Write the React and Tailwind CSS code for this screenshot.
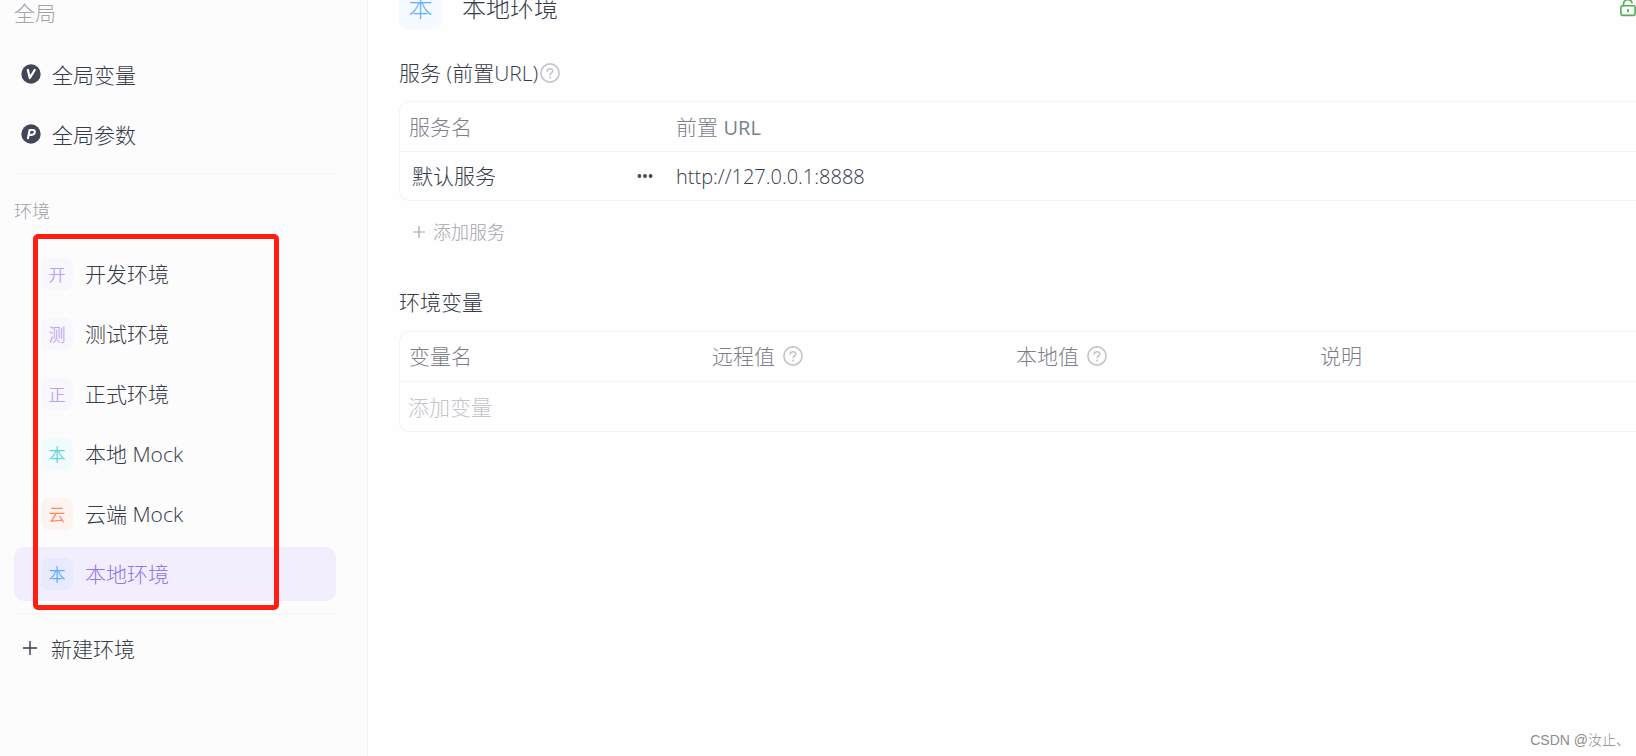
const environments = [
  { mark: '开', name: '开发环境', tone: 'bg-[#f8f7fd] text-[#b9a3f5]' },
  { mark: '测', name: '测试环境', tone: 'bg-[#f8f7fd] text-[#b9a3f5]' },
  { mark: '正', name: '正式环境', tone: 'bg-[#f8f7fd] text-[#b9a3f5]' },
  { mark: '本', name: '本地 Mock', tone: 'bg-[#f1fafc] text-[#5fd6d2]' },
  { mark: '云', name: '云端 Mock', tone: 'bg-[#fff3f0] text-[#ff8a62]' },
  { mark: '本', name: '本地环境', tone: 'bg-[#e8eafe] text-[#5eadff]', active: true },
];

function CircleV() {
  return (
    <svg viewBox="0 0 20 20" className="size-5 shrink-0" aria-hidden="true">
      <circle cx="10" cy="10" r="9.7" fill="#424757" />
      <path d="M6.9 6 8.8 14 13.7 6" fill="none" stroke="#fff" strokeWidth="2.3" strokeLinejoin="round" strokeLinecap="round" />
    </svg>
  );
}

function CircleP() {
  return (
    <svg viewBox="0 0 20 20" className="size-5 shrink-0" aria-hidden="true">
      <circle cx="10" cy="10" r="9.7" fill="#424757" />
      <path d="M7 14.2 8.6 6h3.2c1.6 0 2.3 1 2 2.4-.3 1.5-1.4 2.5-3 2.5H7.8" fill="none" stroke="#fff" strokeWidth="2.1" strokeLinejoin="round" strokeLinecap="round" />
    </svg>
  );
}

function Help() {
  return (
    <svg viewBox="0 0 20 20" className="size-5 shrink-0" fill="none" stroke="#c4c5ca" aria-hidden="true">
      <circle cx="10" cy="10" r="9.1" strokeWidth="1.6" />
      <path d="M7.2 8.2c0-1.6 1.2-2.5 2.8-2.5s2.8.9 2.8 2.3c0 1.8-2.7 1.8-2.7 3.8" strokeWidth="1.5" strokeLinecap="round" />
      <circle cx="10.1" cy="14.4" r="1" fill="#c4c5ca" stroke="none" />
    </svg>
  );
}

function Plus({ className }) {
  return (
    <svg viewBox="0 0 14 14" className={className} fill="none" stroke="currentColor" aria-hidden="true">
      <path d="M7 0v14M0 7h14" strokeWidth="1.4" />
    </svg>
  );
}

function Unlock() {
  return (
    <svg viewBox="0 0 16 18" className="h-[18px] w-4" fill="none" stroke="#4caf50" strokeWidth="1.6" aria-hidden="true">
      <rect x="0.9" y="6.8" width="14.2" height="9.6" rx="1.6" />
      <path d="M3.6 6.6V4.4C3.6 2.2 5.4.8 7.8.8c2.2 0 3.8 1.1 4.2 2.9" strokeLinecap="round" />
      <path d="M8 10v3.2" strokeWidth="1.8" />
    </svg>
  );
}

function GlobalItem({ icon, children }) {
  return (
    <button type="button" className="flex h-[54px] w-full items-center gap-[11px] rounded-[10px] pl-[7px] text-left">
      {icon}
      <span className="pt-[2px]">{children}</span>
    </button>
  );
}

function Sidebar() {
  return (
    <aside className="w-[368px] shrink-0 border-r border-[#f3f3f5] bg-[#fcfcfc] pl-[14px] pr-[31px]">
      <h2 className="h-[47px] leading-[26px] text-[#a2a3ab]">全局</h2>
      <nav className="flex flex-col gap-[6px]" aria-label="全局">
        <GlobalItem icon={<CircleV />}>全局变量</GlobalItem>
        <GlobalItem icon={<CircleP />}>全局参数</GlobalItem>
      </nav>
      <hr className="mt-3 border-[#f5f5f7]" />
      <h2 className="mt-[23px] h-[50px] text-lg leading-7 text-[#a2a3ab]">环境</h2>
      <nav className="relative flex flex-col gap-[6px]" aria-label="环境">
        {environments.map((env) => (
          <button
            key={env.name}
            type="button"
            className={
              env.active
                ? 'flex h-[54px] w-full items-center gap-3 rounded-[10px] bg-[#f2eefd] pl-[27px] text-left text-[#9373ee]'
                : 'flex h-[54px] w-full items-center gap-3 rounded-[10px] pl-[27px] text-left'
            }
          >
            <span className={`flex size-8 items-center justify-center rounded-lg pt-[2px] text-[17px] font-[350] leading-6 ${env.tone}`}>{env.mark}</span>
            <span>{env.name}</span>
          </button>
        ))}
        <div className="pointer-events-none absolute -bottom-[9px] -top-[13px] left-[19px] right-[57px] rounded-[5px] border-[5px] border-[#ff1e12]" />
      </nav>
      <hr className="mt-3 border-t-2 border-[#f7f7f9]" />
      <button type="button" className="mt-[9px] flex h-12 w-full items-center gap-[14px] pl-[9px] text-left">
        <Plus className="size-[14px]" />
        <span className="pt-[2px]">新建环境</span>
      </button>
    </aside>
  );
}

function ServiceTable() {
  return (
    <div className="rounded-l-[10px] border border-r-0 border-[#f3f3f5]">
      <table className="w-full table-fixed text-left">
        <colgroup>
          <col className="w-[267px]" />
          <col />
        </colgroup>
        <thead className="text-[#7d808b]">
          <tr className="h-[49px] border-b border-[#f3f3f5]">
            <th scope="col" className="pl-[9px] pt-[2px] font-light">服务名</th>
            <th scope="col" className="pl-[9px] pt-[2px] font-light">前置 <span className="text-xl font-medium">URL</span></th>
          </tr>
        </thead>
        <tbody>
          <tr className="h-[49px]">
            <td className="pl-3 pr-[14px]">
              <div className="flex items-center">
                <input aria-label="服务名" defaultValue="默认服务" className="h-8 w-0 min-w-0 flex-1 bg-transparent pt-[1px] outline-none" />
                <button type="button" aria-label="更多">
                  <svg viewBox="0 0 16 6" className="h-[6px] w-4" fill="#424757" aria-hidden="true">
                    <circle cx="2.4" cy="3" r="1.9" />
                    <circle cx="8" cy="3" r="1.9" />
                    <circle cx="13.6" cy="3" r="1.9" />
                  </svg>
                </button>
              </div>
            </td>
            <td className="pl-[9px]">
              <input aria-label="前置 URL" defaultValue="http://127.0.0.1:8888" className="h-8 w-full bg-transparent pt-[2px] text-xl outline-none" />
            </td>
          </tr>
        </tbody>
      </table>
    </div>
  );
}

function VariableTable() {
  return (
    <div className="rounded-l-[10px] border border-r-0 border-[#f3f3f5]">
      <table className="w-full table-fixed text-left">
        <colgroup>
          <col className="w-[303px]" />
          <col className="w-[304px]" />
          <col className="w-[304px]" />
          <col />
        </colgroup>
        <thead className="text-[#7d808b]">
          <tr className="h-[49px] border-b border-[#f3f3f5]">
            <th scope="col" className="pl-[9px] font-light">变量名</th>
            <th scope="col" className="pl-[9px] font-light"><span className="flex items-center gap-2">远程值<Help /></span></th>
            <th scope="col" className="pl-[9px] font-light"><span className="flex items-center gap-2">本地值<Help /></span></th>
            <th scope="col" className="pl-[9px] font-light">说明</th>
          </tr>
        </thead>
        <tbody>
          <tr className="h-[50px]">
            <td colSpan={4} className="pl-2">
              <input aria-label="变量名" placeholder="添加变量" className="h-8 w-full bg-transparent pt-[1px] outline-none placeholder:text-[#c4c5ca]" />
            </td>
          </tr>
        </tbody>
      </table>
    </div>
  );
}

export default function App() {
  return (
    <div className="relative flex min-h-screen overflow-hidden bg-[#fefefe] font-['Open_Sans','Noto_Sans_CJK_SC',sans-serif] text-[21px] font-light leading-8 text-[#363b4b]">
      <Sidebar />
      <main className="min-w-0 flex-1 pl-[31px]">
        <header className="-mt-[14px] flex h-[43px] items-center">
          <span className="flex size-[43px] items-center justify-center rounded-lg bg-[#f4faff] text-2xl text-[#5eadff]">本</span>
          <h1 className="ml-5 flex-1 text-2xl">本地环境</h1>
          <button type="button" aria-label="解锁"><Unlock /></button>
        </header>

        <h2 className="mb-3 mt-7 flex h-8 items-center gap-[2px]"><span>服务 (前置URL)</span><Help /></h2>
        <ServiceTable />
        <button type="button" className="ml-[14px] mt-[15px] flex h-8 items-center gap-2 text-lg text-[#a2a3ab]">
          <Plus className="size-3" />
          添加服务
        </button>

        <h2 className="mb-[13px] mt-[38px] h-8">环境变量</h2>
        <VariableTable />
      </main>
      <p className="absolute bottom-[6px] right-[6px] font-['Liberation_Sans','Noto_Sans_CJK_SC',sans-serif] text-sm text-[#8c8c8c]">CSDN @汝止、</p>
    </div>
  );
}
